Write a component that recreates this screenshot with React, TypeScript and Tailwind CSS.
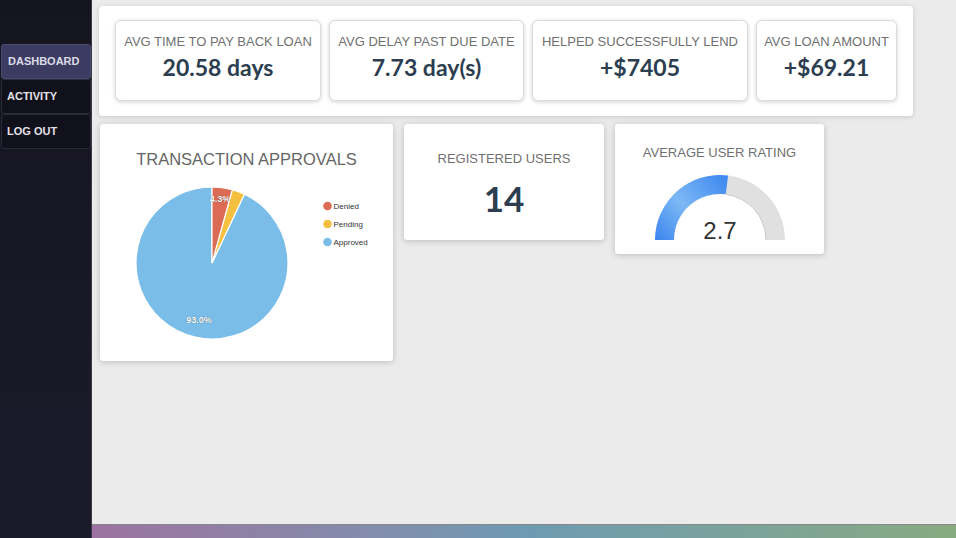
import React from "react";

const lato = { fontFamily: "Lato, 'Liberation Sans', sans-serif" };

function StatCard({ label, value, w }: { label: string; value: string; w: string }) {
  return (
    <div className={`${w} h-[81px] shrink-0 rounded-[6px] border border-[#dcdcdc] bg-white shadow-[0_1px_4px_rgba(0,0,0,0.18)] flex flex-col items-center pt-[13px]`}>
      <div className="text-[13px] leading-[15px] text-[#707070] whitespace-nowrap">{label}</div>
      <div className="mt-[4px] text-[23px] leading-[28px] font-bold text-[#2c3e50]" style={lato}>
        {value}
      </div>
    </div>
  );
}

function Pie() {
  const cx = 112;
  const cy = 94;
  const r = 76;
  return (
    <svg width="293" height="192" viewBox="0 0 293 192">
      <path d={`M ${cx} ${cy} L 112 18 A ${r} ${r} 0 1 0 144.36 25.24 Z`} fill="#7abde8" stroke="#fff" strokeWidth="1.2" />
      <path d={`M ${cx} ${cy} L 132.28 20.76 A ${r} ${r} 0 0 1 144.36 25.24 Z`} fill="#f5bf3f" stroke="#fff" strokeWidth="1.2" />
      <path d={`M ${cx} ${cy} L 112 18 A ${r} ${r} 0 0 1 132.28 20.76 Z`} fill="#dc6b55" stroke="#fff" strokeWidth="1.2" />
      <text x="120" y="33" textAnchor="middle" fontSize="9" fontWeight="bold" fill="#fff" fontFamily="Liberation Sans, sans-serif" style={{ textShadow: "0 0 1px rgba(0,0,0,0.6)" }}>4.3%</text>
      <text x="99" y="154" textAnchor="middle" fontSize="9" fontWeight="bold" fill="#fff" fontFamily="Liberation Sans, sans-serif" style={{ textShadow: "0 0 1px rgba(0,0,0,0.6)" }}>93.0%</text>
      <circle cx="227.5" cy="37" r="4.3" fill="#dc6b55" />
      <circle cx="227.5" cy="55" r="4.3" fill="#f5bf3f" />
      <circle cx="227.5" cy="73" r="4.3" fill="#7abde8" />
      <text x="233.5" y="40" fontSize="8" fill="#333" fontFamily="Liberation Sans, sans-serif">Denied</text>
      <text x="233.5" y="58" fontSize="8" fill="#333" fontFamily="Liberation Sans, sans-serif">Pending</text>
      <text x="233.5" y="76" fontSize="8" fill="#333" fontFamily="Liberation Sans, sans-serif">Approved</text>
    </svg>
  );
}

function Gauge() {
  return (
    <svg width="209" height="92" viewBox="0 0 209 92">
      <defs>
        <linearGradient id="gblue" x1="40" y1="78" x2="113" y2="13" gradientUnits="userSpaceOnUse">
          <stop offset="0" stopColor="#3a85ef" />
          <stop offset="0.45" stopColor="#7db8f5" />
          <stop offset="1" stopColor="#3a86f0" />
        </linearGradient>
      </defs>
      <path d="M 113.15 13.51 A 65 65 0 0 1 170 78 L 151 78 A 46 46 0 0 0 110.77 32.36 Z" fill="#e0e0e0" />
      <path d="M 151 78 A 46 46 0 0 0 110.77 32.36" fill="none" stroke="#c9c9c9" strokeWidth="1" />
      <path d="M 40 78 A 65 65 0 0 1 113.15 13.51 L 110.77 32.36 A 46 46 0 0 0 59 78 Z" fill="url(#gblue)" />
      <text x="105" y="77" textAnchor="middle" fontSize="24" fill="#333" fontFamily="Liberation Sans, sans-serif">2.7</text>
    </svg>
  );
}

export default function App() {
  return (
    <div className="flex w-[956px] h-[538px] overflow-hidden bg-[#ebebeb]" style={{ fontFamily: "'Liberation Sans', Arial, sans-serif" }}>
      <aside className="w-[92px] shrink-0 h-full bg-gradient-to-b from-[#15151f] to-[#1b1a2b] border-r border-[#3a3a48] pt-[44px] flex flex-col">
        <div className="h-[35px] ml-[1px] rounded-[3px] bg-[#3c3c63] border border-[#4a4a70] flex items-center pl-[6px] text-[11px] font-bold text-[#dcdce6]">DASHBOARD</div>
        <div className="h-[35px] ml-[1px] rounded-[3px] bg-[#11111c] border border-[#2a2a38] flex items-center pl-[5px] text-[11px] font-bold text-[#e2e2e8]">ACTIVITY</div>
        <div className="h-[35px] ml-[1px] rounded-[3px] bg-[#11111c] border border-[#2a2a38] flex items-center pl-[5px] text-[11px] font-bold text-[#e2e2e8]">LOG OUT</div>
      </aside>
      <div className="flex-1 flex flex-col h-full">
        <main className="flex-1 pl-[7px] pt-[6px]">
          <div className="inline-flex gap-[8px] bg-white rounded-[4px] shadow-[0_1px_5px_rgba(0,0,0,0.15)] pt-[14px] pb-[15px] px-[16px]">
            <StatCard w="w-[206px]" label="AVG TIME TO PAY BACK LOAN" value="20.58 days" />
            <StatCard w="w-[195px]" label="AVG DELAY PAST DUE DATE" value="7.73 day(s)" />
            <StatCard w="w-[216px]" label="HELPED SUCCESSFULLY LEND" value="+$7405" />
            <StatCard w="w-[141px]" label="AVG LOAN AMOUNT" value="+$69.21" />
          </div>
          <div className="mt-[8px] ml-[1px] flex items-start gap-[11px]">
            <div className="w-[293px] h-[237px] bg-white rounded-[3px] shadow-[0_1px_6px_rgba(0,0,0,0.2)] flex flex-col items-center">
              <div className="pt-[25px] text-[16.5px] leading-[20px] text-[#666]">TRANSACTION APPROVALS</div>
              <Pie />
            </div>
            <div className="w-[200px] h-[116px] bg-white rounded-[3px] shadow-[0_1px_6px_rgba(0,0,0,0.2)] flex flex-col items-center">
              <div className="pt-[27px] text-[13px] leading-[16px] text-[#707070]">REGISTERED USERS</div>
              <div className="mt-[11px] text-[35px] leading-[40px] font-bold text-[#2c3e50]" style={lato}>14</div>
            </div>
            <div className="w-[209px] h-[130px] bg-white rounded-[3px] shadow-[0_1px_6px_rgba(0,0,0,0.2)] flex flex-col items-center">
              <div className="pt-[21px] text-[13px] leading-[16px] text-[#707070]">AVERAGE USER RATING</div>
              <div className="mt-[1px]"><Gauge /></div>
            </div>
          </div>
        </main>
        <div className="h-[14px] shrink-0 border-t border-[#888] bg-gradient-to-r from-[#9c72a2] via-[#6e9ab2] to-[#88aa80]" />
      </div>
    </div>
  );
}
